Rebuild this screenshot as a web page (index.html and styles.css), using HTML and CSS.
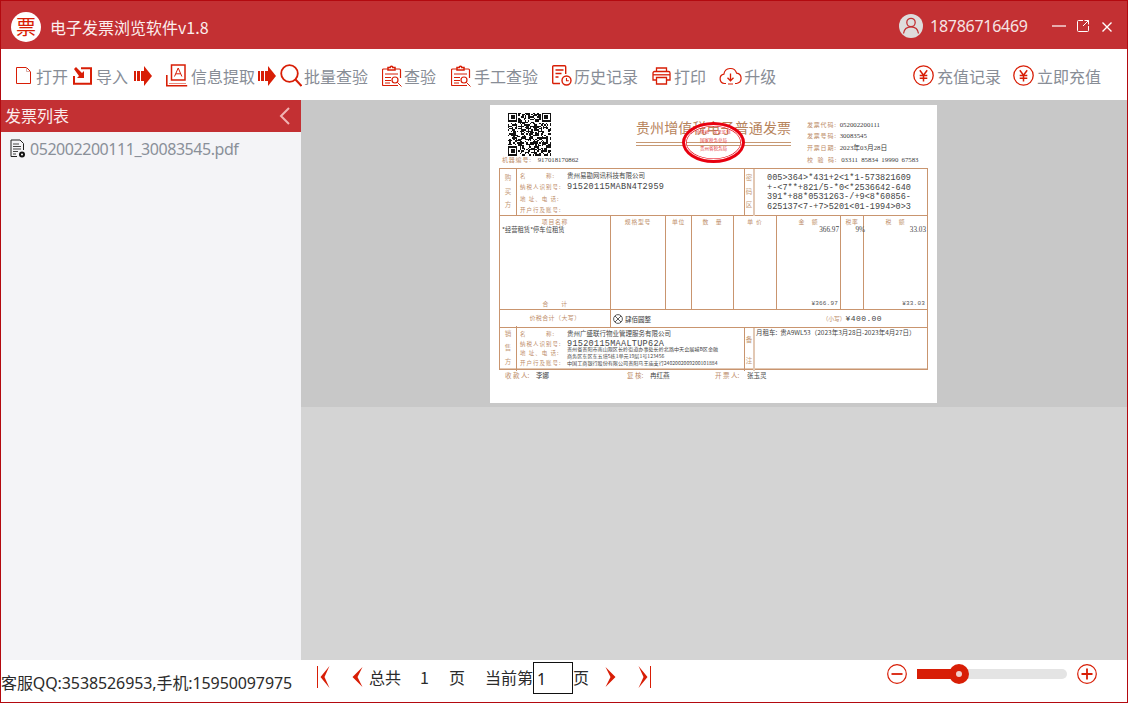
FILE: index.html
```html
<!DOCTYPE html>
<html lang="zh">
<head>
<meta charset="utf-8">
<title>电子发票浏览软件</title>
<link rel="stylesheet" href="styles.css">
</head>
<body>
<div class="app">
  <header class="titlebar">
    <div class="logo">票</div>
    <div class="app-name">电子发票浏览软件v1.8</div>
    <div class="spacer"></div>
    <svg class="avatar" viewBox="0 0 24 24"><circle cx="12" cy="12" r="12" fill="#dedcdc"/><circle cx="12" cy="8.500" r="4.200" fill="none" stroke="#c33033" stroke-width="1.300"/><path d="M4.500 19.500c.6-4.200 3.600-6.600 7.500-6.600s6.900 2.400 7.500 6.600" fill="none" stroke="#c33033" stroke-width="1.300"/></svg>
    <div class="phone">18786716469</div>
    <svg class="win win-min" viewBox="0 0 14 12"><path d="M0 6h14" stroke="#fff" stroke-width="1.200"/></svg>
    <svg class="win win-max" viewBox="0 0 12 12"><path d="M6 .5H1.500a1 1 0 0 0-1 1v9a1 1 0 0 0 1 1h9a1 1 0 0 0 1-1V6M7.500.5h4v4M11.500.5 6 6" fill="none" stroke="#fff" stroke-width="1"/></svg>
    <svg class="win win-close" viewBox="0 0 10 10"><path d="M.5.500l9 9M9.500.500l-9 9" stroke="#fff" stroke-width="1.400"/></svg>
  </header>

  <nav class="toolbar">
    <div class="tool t-open">
      <svg class="ic" width="15" height="17" viewBox="0 0 15 17"><path d="M.5.500h10l4 4v12H.5z" fill="none" stroke="#d81e06"/><path d="M10.500.500v4h4" fill="none" stroke="#d9a9a3"/></svg>
      <span>打开</span>
    </div>
    <div class="tool t-import">
      <svg class="ic" width="19" height="18" viewBox="0 0 19 18"><path d="M8 1.200h10v15.600H1V9" fill="none" stroke="#d81e06" stroke-width="2"/><path d="M1 2l2-2 6 6 2-2v7H4l2-2z" fill="#d81e06"/></svg>
      <span>导入</span>
    </div>
    <svg class="flow" width="18" height="20" viewBox="0 0 18 20"><path d="M0 5h2v10H0zM3 5h3v10H3zM7 5h3v10H7z" fill="#d81e06"/><path d="M10 0l8 10-8 10z" fill="#d81e06"/></svg>
    <div class="tool t-extract">
      <svg class="ic" width="22" height="23" viewBox="0 0 22 23"><path d="M5.500 1h13.500v15H5.500z" fill="none" stroke="#d81e06" stroke-width="1.500"/><path d="M8.500 12.500l3.700-8.500 3.700 8.500M9.800 9.800h4.800" fill="none" stroke="#d81e06"/><path d="M.8 11v10.700h20.400" fill="none" stroke="#d81e06" stroke-width="1.600"/><path d="M3 19.500h17" stroke="#e98c7e"/></svg>
      <span>信息提取</span>
    </div>
    <svg class="flow f2" width="18" height="20" viewBox="0 0 18 20"><path d="M0 5h2v10H0zM3 5h3v10H3zM7 5h3v10H7z" fill="#d81e06"/><path d="M10 0l8 10-8 10z" fill="#d81e06"/></svg>
    <div class="tool t-batch">
      <svg class="ic" width="22" height="23" viewBox="0 0 22 23"><circle cx="9.500" cy="9.500" r="8.300" fill="none" stroke="#d81e06" stroke-width="1.800"/><path d="M15.500 15.500l6 6.500" stroke="#d81e06" stroke-width="2"/></svg>
      <span>批量查验</span>
    </div>
    <div class="tool t-check">
      <svg class="ic" width="21" height="22" viewBox="0 0 21 22"><path d="M6 4H1.500a1 1 0 0 0-1 1v14.500a1 1 0 0 0 1 1h14.500M13 4h4.500a1 1 0 0 1 1 1v8" fill="none" stroke="#d81e06" stroke-width="1.200"/><path d="M6 5V2.500h2.200a1.300 1.300 0 0 1 2.600 0H13V5z" fill="none" stroke="#d81e06" stroke-width="1.500"/><path d="M3 9h13M3 12.500h6M3 15.500h6M3 18h5" stroke="#d81e06"/><circle cx="13" cy="15" r="3" fill="none" stroke="#d81e06" stroke-width="1.200"/><path d="M15.500 17.500l4 4" stroke="#d81e06"/></svg>
      <span>查验</span>
    </div>
    <div class="tool t-manual">
      <svg class="ic" width="21" height="22" viewBox="0 0 21 22"><path d="M6 4H1.500a1 1 0 0 0-1 1v14.500a1 1 0 0 0 1 1h14.500M13 4h4.500a1 1 0 0 1 1 1v8" fill="none" stroke="#d81e06" stroke-width="1.200"/><path d="M6 5V2.500h2.200a1.300 1.300 0 0 1 2.600 0H13V5z" fill="none" stroke="#d81e06" stroke-width="1.500"/><path d="M3 9h13M3 12.500h6M3 15.500h6M3 18h5" stroke="#d81e06"/><circle cx="13" cy="15" r="3" fill="none" stroke="#d81e06" stroke-width="1.200"/><path d="M15.500 17.500l4 4" stroke="#d81e06"/></svg>
      <span>手工查验</span>
    </div>
    <div class="tool t-history">
      <svg class="ic" width="20" height="21" viewBox="0 0 20 21"><path d="M8 18.500H1.700a1 1 0 0 1-1-1V1.700a1 1 0 0 1 1-1h11a1 1 0 0 1 1 1V9" fill="none" stroke="#d81e06" stroke-width="1.400"/><path d="M3.500 5h8M3.500 8.500h6M3.500 12h3" stroke="#d81e06" stroke-width="1.300"/><circle cx="14.500" cy="15.500" r="4.500" fill="#fff" stroke="#d81e06" stroke-width="1.400"/><path d="M14.500 13v2.800h2.300" fill="none" stroke="#d81e06" stroke-width="1.100"/></svg>
      <span>历史记录</span>
    </div>
    <div class="tool t-print">
      <svg class="ic" width="19" height="18" viewBox="0 0 19 18"><path d="M4.500 4.500V1h10v3.500" fill="none" stroke="#d81e06" stroke-width="1.300"/><path d="M4 13H1V6a1.500 1.500 0 0 1 1.500-1.500h14A1.500 1.500 0 0 1 18 6v7h-3" fill="none" stroke="#d81e06" stroke-width="1.300"/><path d="M1 7.800h17" stroke="#d81e06" stroke-width="1.300"/><path d="M4.500 10.500h10V17h-10z" fill="none" stroke="#d81e06" stroke-width="1.300"/></svg>
      <span>打印</span>
    </div>
    <div class="tool t-up">
      <svg class="ic" width="23" height="18" viewBox="0 0 23 18"><path d="M7 16.500H5.500a4.700 4.700 0 0 1-.6-9.300 6.500 6.500 0 0 1 12.700-1 5.200 5.200 0 0 1 0 10.300H16M9 17h5" fill="none" stroke="#d81e06" stroke-width="1.200"/><path d="M11.500 6.500v7M8.500 10.800l3 3 3-3" fill="none" stroke="#d81e06" stroke-width="1.300"/></svg>
      <span>升级</span>
    </div>
    <div class="spacer"></div>
    <div class="tool t-record">
      <svg class="ic" width="21" height="21" viewBox="0 0 21 21"><circle cx="10.500" cy="10.500" r="9.700" fill="none" stroke="#d81e06" stroke-width="1.300"/><path d="M6.800 5.200l3.700 5 3.700-5M10.500 10v6.500M6.700 10.500h7.600M6.700 13.300h7.600" fill="none" stroke="#d81e06" stroke-width="1.500"/></svg>
      <span>充值记录</span>
    </div>
    <div class="tool t-pay">
      <svg class="ic" width="21" height="21" viewBox="0 0 21 21"><circle cx="10.500" cy="10.500" r="9.700" fill="none" stroke="#d81e06" stroke-width="1.300"/><path d="M6.800 5.200l3.700 5 3.700-5M10.500 10v6.500M6.700 10.500h7.600M6.700 13.300h7.600" fill="none" stroke="#d81e06" stroke-width="1.500"/></svg>
      <span>立即充值</span>
    </div>
  </nav>

  <main class="main">
    <aside class="sidebar">
      <div class="side-head">
        <span>发票列表</span>
        <svg width="11" height="18" viewBox="0 0 11 18"><path d="M10 1 2 9l8 8" fill="none" stroke="#f0b4b4" stroke-width="2"/></svg>
      </div>
      <div class="file-row">
        <svg width="16" height="20" viewBox="0 0 16 20"><path d="M1 1h9l3.500 3.500V11M7 17.500H1z" fill="none" stroke="#222"/><path d="M1 1v16.500" stroke="#222"/><path d="M3 5h6M3 7.500h8M3 10h8M3 12.500h5M3 15h3" stroke="#444"/><circle cx="12" cy="15.500" r="3" fill="#111"/><circle cx="12" cy="15.500" r="1" fill="#fff"/></svg>
        <span>052002200111_30083545.pdf</span>
      </div>
    </aside>

    <section class="viewer">
      <div class="page-band">
        <article class="paper">
          <div class="inv-head">
            <div class="inv-left">
              <svg id="qr" class="qr" viewBox="0 0 33 33" shape-rendering="crispEdges"></svg>
              <div class="machine"><span class="lb hl hl-m">机器编号:</span> 917018170862</div>
            </div>
            <div class="inv-title">
              <div class="title-text">贵州增值税电子普通发票</div>
              <div class="title-rule"></div>
            </div>
            <div class="inv-meta">
              <div><span class="lb hl">发票代码:</span> 052002200111</div>
              <div><span class="lb hl">发票号码:</span> 30083545</div>
              <div><span class="lb hl">开票日期:</span> 2023年03月28日</div>
              <div class="check-code"><span class="lb hl">校 验 码:</span> 03311 85834 19990 67583</div>
            </div>
          </div>

          <div class="stamp">
            <div class="stamp-a">全国统一发票监制</div>
            <div class="stamp-b">国家税务总局</div>
            <div class="stamp-c">贵州省税务局</div>
          </div>

          <div class="table">
            <div class="row row-party">
              <div class="side-cell">购<br>买<br>方</div>
              <div class="party buyer">
                <div><span class="lb k">名　　　称:</span>贵州易勘网讯科技有限公司</div>
                <div><span class="lb k">纳税人识别号:</span><span class="taxid">91520115MABN4T2959</span></div>
                <div><span class="lb k">地 址、电 话:</span></div>
                <div><span class="lb k">开户行及账号:</span></div>
              </div>
              <div class="side-cell mid">密<br>码<br>区</div>
              <div class="cipher">005&gt;364&gt;*431+2&lt;1*1-573821609<br>+-&lt;7**+821/5-*0&lt;*2536642-640<br>391*+88*0531263-/+9&lt;8*60856-<br>625137&lt;7-+7&gt;5201&lt;01-1994&gt;0&gt;3</div>
            </div>

            <div class="row row-items">
              <div class="col col-name"><div class="ch">项目名称</div><div class="cv left">*经营租赁*停车位租赁</div><div class="cf center lb">合　　计</div></div>
              <div class="col"><div class="ch">规格型号</div></div>
              <div class="col"><div class="ch">单位</div></div>
              <div class="col"><div class="ch">数　量</div></div>
              <div class="col"><div class="ch">单 价</div></div>
              <div class="col"><div class="ch">金　额</div><div class="cv right">366.97</div><div class="cf num">¥366.97</div></div>
              <div class="col"><div class="ch">税率</div><div class="cv right rate">9%</div></div>
              <div class="col"><div class="ch">税　额</div><div class="cv right">33.03</div><div class="cf num">¥33.03</div></div>
            </div>

            <div class="row row-total">
              <div class="tot-label lb">价税合计（大写）</div>
              <div class="tot-val">
                <svg width="10" height="10" viewBox="0 0 10 10"><circle cx="5" cy="5" r="4.400" fill="none" stroke="#333" stroke-width=".8"/><path d="M2 2l6 6M8 2l-6 6" stroke="#333" stroke-width=".8"/></svg>
                <span>肆佰圆整</span>
                <span class="spacer"></span>
                <span class="lb small-k">（小写）</span><span class="mono-total">¥400.00</span>
              </div>
            </div>

            <div class="row row-party row-seller">
              <div class="side-cell">销<br>售<br>方</div>
              <div class="party seller">
                <div class="seller-name"><span class="lb k">名　　　称:</span>贵州广盛联行物业管理服务有限公司</div>
                <div class="seller-id"><span class="lb k">纳税人识别号:</span><span class="taxid">91520115MAALTUP62A</span></div>
                <div class="addr"><span class="lb k">地 址、电 话:</span><span class="addr-v">贵州省贵阳市南山观区长岭街道办事处长岭北路中天会展城B区金融<br>商务区东区东五塔5栋1单元19层1号123456</span></div>
                <div class="bank"><span class="lb k">开户行及账号:</span><span class="bank-v">中国工商银行股份有限公司贵阳马王庙支行2402002009200101884</span></div>
              </div>
              <div class="side-cell mid two">备<br>注</div>
              <div class="remark">月租车:&nbsp; 贵A9WL53（2023年3月28日-2023年4月27日）</div>
            </div>
          </div>

          <div class="inv-foot">
            <div class="f-a"><span class="lb fl w31">收 款 人:</span>李娜</div>
            <div class="f-b"><span class="lb fl w23">复 核:</span>冉红燕</div>
            <div class="f-c"><span class="lb fl w32">开 票 人:</span>张玉灵</div>
          </div>
        </article>
      </div>
      <div class="viewer-rest"></div>
    </section>
  </main>

  <footer class="footer">
    <div class="service">客服QQ:3538526953,手机:15950097975</div>
    <svg class="nav n-first" width="13" height="22" viewBox="0 0 13 22"><path d="M.5 0v22" stroke="#d81e06"/><path d="M12.500 0 3.500 11l9 11-5-11z" fill="#d81e06"/></svg>
    <svg class="nav n-prev" width="11" height="20" viewBox="0 0 11 20"><path d="M10.500 0 .5 10l10 10-5-10z" fill="#d81e06"/></svg>
    <span class="f-txt ft-total">总共</span>
    <span class="f-txt ft-count">1</span>
    <span class="f-txt ft-page">页</span>
    <span class="f-txt ft-cur">当前第</span>
    <input class="page-input" type="text" value="1" aria-label="当前页">
    <span class="f-txt">页</span>
    <svg class="nav n-next" width="11" height="20" viewBox="0 0 11 20"><path d="M.5 0l10 10-10 10 5-10z" fill="#d81e06"/></svg>
    <svg class="nav n-last" width="13" height="22" viewBox="0 0 13 22"><path d="M12.500 0v22" stroke="#d81e06"/><path d="M.5 0l9 11-9 11 5-11z" fill="#d81e06"/></svg>
    <div class="spacer"></div>
    <svg class="zoom-btn" width="20" height="20" viewBox="0 0 20 20"><circle cx="10" cy="10" r="9.300" fill="none" stroke="#d81e06" stroke-width="1.200"/><path d="M4.500 10h11" stroke="#d81e06" stroke-width="1.800"/></svg>
    <div class="slider"><div class="slider-fill"></div><div class="slider-thumb"></div></div>
    <svg class="zoom-btn" width="20" height="20" viewBox="0 0 20 20"><circle cx="10" cy="10" r="9.300" fill="none" stroke="#d81e06" stroke-width="1.200"/><path d="M4.500 10h11M10 4.500v11" stroke="#d81e06" stroke-width="1.800"/></svg>
  </footer>
</div>
<script src="qr.js"></script>
</body>
</html>
```

FILE: styles.css
```css
* { box-sizing: border-box; }
html, body { margin: 0; padding: 0; }
body { font-family: "Noto Sans", "Noto Sans CJK SC", sans-serif; overflow: hidden; }
.spacer { flex: 1; }

.app { width: 1128px; height: 703px; border: 1px solid #b3090f; display: flex; flex-direction: column; background: #fff; }

.titlebar { height: 48px; background: #c33033; color: #fff; display: flex; align-items: center; padding-left: 10px; flex: none; }
.logo { width: 30px; height: 30px; border-radius: 50%; background: #fff; color: #d81e06; font-size: 20px; line-height: 30px; text-align: center; margin-top: 3px; font-family: "Noto Sans CJK SC", sans-serif; }
.app-name { margin-left: 9px; font-size: 16px; line-height: 24px; margin-top: 4px; color: #fbeeee; font-family: "Noto Sans CJK SC", sans-serif; }
.avatar { width: 24px; height: 24px; margin-top: 2px; }
.phone { margin-left: 7px; font-size: 16px; width: 98px; letter-spacing: -.27px; margin-top: 2px; color: #f6e4e4; }
.win { display: block; flex: none; }
.win-min { width: 14px; height: 12px; margin-left: 24px; margin-top: 2px; }
.win-max { width: 12px; height: 12px; margin-left: 11px; margin-top: 1px; }
.win-close { width: 10px; height: 10px; margin-left: 13px; margin-right: 15px; margin-top: 3px; }

.toolbar { height: 51px; display: flex; align-items: center; padding-left: 15px; padding-top: 2px; flex: none; background: #fff; }
.tool { display: flex; align-items: center; color: #888d96; font-size: 16px; font-family: "Noto Sans CJK SC", sans-serif; }
.tool span { display: block; line-height: 22px; }
.ic { display: block; flex: none; }
.t-open .ic { margin-right: 5px; }
.t-open { margin-right: 5px; }
.t-import .ic { margin-right: 4px; }
.flow { display: block; flex: none; margin-left: 6px; margin-right: 14px; }
.flow.f2 { margin-left: 3px; margin-right: 4px; }
.t-extract .ic { margin-right: 3px; }
.t-batch .ic { margin-right: 2px; }
.t-batch { margin-right: 14px; }
.t-check .ic { margin-right: 1px; }
.t-check { margin-right: 15px; }
.t-manual .ic { margin-right: 2px; }
.t-manual { margin-right: 14px; }
.t-history .ic { margin-right: 2px; }
.t-history { margin-right: 14px; }
.t-print .ic { margin-right: 3px; }
.t-print { margin-right: 13px; }
.t-up .ic { margin-right: 2px; }
.t-record .ic { margin-right: 3px; }
.t-record { margin-right: 12px; }
.t-pay .ic { margin-right: 3px; }
.t-pay { margin-right: 26px; }

.main { flex: 1; display: flex; min-height: 0; }
.sidebar { width: 300px; background: #f4f4f7; flex: none; }
.side-head { height: 32px; background: #c33033; color: #fbecec; display: flex; align-items: center; justify-content: space-between; padding: 0 11px 2px 4px; font-size: 16px; font-family: "Noto Sans CJK SC", sans-serif; }
.side-head svg { margin-top: 2px; }
.file-row { display: flex; align-items: center; color: #8a9099; font-size: 16px; padding: 1px 0 0 9px; height: 33px; }
.file-row svg { display: block; flex: none; margin-right: 4px; }
.file-row span { letter-spacing: -.45px; }

.viewer { flex: 1; display: flex; flex-direction: column; min-width: 0; }
.page-band { height: 307px; background: #c8c8c8; display: flex; justify-content: center; padding: 5px 1px 0 0; flex: none; }
.viewer-rest { flex: 1; background: #d4d4d4; }

.paper { position: relative; width: 447px; height: 298px; background: #fff; color: #3a3a3a; font-family: "Liberation Serif", "Noto Sans CJK SC", serif; font-size: 6.800px; padding-left: 9px; overflow: hidden; }
.lb { color: #bd8c68; }
.hl { display: inline-block; width: 31px; font-size: 6px; letter-spacing: .8px; white-space: nowrap; font-family: "Noto Sans CJK SC", sans-serif; }
.hl-m { width: 34px; }
.inv-head { height: 63px; display: flex; margin-left: -9px; padding: 7px 0 0 12px; }
.inv-left { width: 134px; flex: none; }
.qr { display: block; width: 43px; height: 44px; margin-left: 6px; }
.machine { line-height: 8px; white-space: nowrap; }
.inv-title { width: 155px; flex: none; margin-right: 16px; }
.title-text { color: #b7845c; font-size: 14px; line-height: 16px; margin-top: 7px; letter-spacing: .1px; white-space: nowrap; font-family: "Noto Sans CJK SC", sans-serif; }
.title-rule { height: 4px; border-top: 1px solid #c79873; border-bottom: 1px solid #c79873; margin-top: 7px; }
.inv-meta { padding-top: 6.500px; line-height: 11.700px; white-space: nowrap; }
.check-code { word-spacing: 1.500px; }

.stamp { position: absolute; left: 192px; top: 17px; width: 63px; height: 41px; border-radius: 50%; border: 3px solid #e8000f; box-shadow: inset 0 0 0 1px #fff, inset 0 0 0 1.600px #e8000f; color: #e23a3a; font-size: 4px; text-align: center; line-height: 8px; font-family: "Noto Sans CJK SC", sans-serif; }
.stamp-a { padding-top: 3px; letter-spacing: .3px; }
.stamp-b, .stamp-c { font-size: 4.500px; }

.table { width: 429px; border: 1px solid #c9956f; }
.row { display: grid; border-top: 1px solid #c9956f; }
.row:first-child { border-top: 0; }
.row-party { grid-template-columns: 17px 228px 10px 1fr; height: 46px; }
.row-seller { height: 42px; border-bottom: 1px solid #e2c8b4; }
.side-cell { border-right: 1px solid #c9956f; color: #c59a78; text-align: center; font-size: 6.500px; line-height: 13.500px; padding-top: 2px; font-family: "Noto Sans CJK SC", sans-serif; }
.row-seller .side-cell { line-height: 14px; margin-top: -2px; padding-top: 0; }
.side-cell.mid { border-right: 2px solid #e2c8b4; }
.row-seller .side-cell.two { line-height: 21px; margin-top: 0; padding-top: 1px; }
.party { border-right: 1px solid #c9956f; padding: 1px 0 0 3px; line-height: 11.400px; font-family: "Noto Sans CJK SC", sans-serif; font-size: 6.500px; color: #444; white-space: nowrap; }
.buyer > div { height: 11.400px; }
.k { display: inline-block; width: 47px; font-size: 5.500px; letter-spacing: 1px; line-height: 8px; white-space: nowrap; }
.taxid { font-family: "Liberation Mono", monospace; font-size: 8.500px; letter-spacing: .3px; color: #444; }
.cipher { padding: 5px 0 0 12px; font-family: "Liberation Mono", monospace; font-size: 8.500px; letter-spacing: .04px; line-height: 9.500px; color: #444; white-space: nowrap; }
.row-items { grid-template-columns: 111px 55px 26px 42px 43px 64px 23px 1fr; height: 94px; }
.col { border-right: 1px solid #c9956f; display: flex; flex-direction: column; }
.col:last-child { border-right: 0; }
.ch { color: #c08f6c; text-align: center; font-size: 5.800px; line-height: 8px; padding-top: 2px; letter-spacing: .8px; font-family: "Noto Sans CJK SC", sans-serif; }
.cv { font-size: 7.200px; line-height: 8px; padding: 0 1px; color: #444; }
.cv.left { padding-left: 2px; font-size: 6.300px; font-family: "Noto Sans CJK SC", sans-serif; }
.cv.right { text-align: right; }
.cv.rate { margin-right: -3px; }
.cf { margin-top: auto; line-height: 8px; padding: 0 2px 1px; font-size: 5.800px; }
.cf.center { text-align: center; letter-spacing: .4px; }
.cf.num { text-align: right; font-family: "Liberation Mono", monospace; font-size: 6px; letter-spacing: .2px; color: #555; }
.row-total { grid-template-columns: 111px 1fr; height: 18px; }
.tot-label { border-right: 1px solid #c9956f; text-align: center; line-height: 16px; font-size: 6px; font-family: "Noto Sans CJK SC", sans-serif; letter-spacing: .4px; }
.tot-val { display: flex; align-items: center; padding: 0 45px 0 2px; font-size: 6.500px; font-family: "Noto Sans CJK SC", sans-serif; gap: 2px; }
.tot-val svg { display: block; flex: none; }
.small-k { font-size: 5.800px; }
.mono-total { font-family: "Liberation Mono", monospace; font-size: 8px; letter-spacing: .4px; color: #444; margin-left: -2px; }
.party.seller { padding-top: 0; }
.seller-name { line-height: 11px; }
.seller-id { line-height: 9px; }
.addr, .bank { display: flex; align-items: center; }
.addr { line-height: 6.800px; height: 14px; margin-top: -3.500px; }
.bank { line-height: 8px; margin-top: -1px; }
.addr .k, .bank .k { flex: none; }
.addr-v, .bank-v { font-size: 5.100px; font-family: "Noto Sans CJK SC", sans-serif; }
.remark { padding: 0 0 0 1px; line-height: 8px; font-size: 6.500px; font-family: "Noto Sans CJK SC", sans-serif; color: #444; white-space: nowrap; }
.inv-foot { display: flex; font-size: 6.500px; line-height: 8px; margin-top: 1px; font-family: "Noto Sans CJK SC", sans-serif; color: #444; }
.f-a { margin-left: 6px; width: 122px; }
.f-b { width: 88px; }
.f-c { width: 80px; }
.fl { display: inline-block; white-space: nowrap; }
.w31 { width: 31px; }
.w23 { width: 23px; }
.w32 { width: 32px; }

.footer { flex: none; height: 42px; display: flex; align-items: center; background: #fff; padding-right: 30px; padding-bottom: 9px; color: #2b2b2b; font-size: 16px; font-family: "Noto Sans CJK SC", sans-serif; }
.service { width: 316px; font-family: "Noto Sans", "Noto Sans CJK SC", sans-serif; letter-spacing: -.1px; white-space: nowrap; padding-top: 11px; }
.nav { display: block; flex: none; }
.n-prev { margin-left: 22px; margin-right: 6px; }
.f-txt { display: block; line-height: 22px; flex: none; }
.ft-count { margin-left: 19px; width: 29px; }
.ft-page { margin-right: 20px; }
.page-input { width: 40px; height: 32px; border: 1px solid #111; padding: 2px 0 0 3px; margin: 2px 0 0; font: 16px "Noto Sans", sans-serif; color: #222; background: #fff; border-radius: 0; outline: 0; }
.n-next { margin-left: 16px; margin-right: 22px; }
.zoom-btn { display: block; flex: none; margin-bottom: 5px; }
.slider { position: relative; width: 150px; height: 10px; margin: 0 10px 5px; background: #e4e4e4; border-radius: 0 5px 5px 0; flex: none; }
.slider-fill { width: 41px; height: 10px; background: #d81e06; }
.slider-thumb { position: absolute; left: 32px; top: -5px; width: 20px; height: 20px; border-radius: 50%; background: #d81e06; }
.slider-thumb::after { content: ""; display: block; width: 6px; height: 6px; border-radius: 50%; background: #f2d0cb; margin: 7px; }
```

FILE: qr.js
```js
// Draws the invoice's QR code with a fixed pseudo-random module pattern.
(function () {
  var svg = document.getElementById('qr');
  var n = 33, seed = 20230328, d = '';
  function next() {
    seed = (seed * 1103515245 + 12345) & 0x7fffffff;
    return (seed >> 16) & 1;
  }
  function inFinder(x, y, ox, oy) {
    return x >= ox - 1 && x <= ox + 7 && y >= oy - 1 && y <= oy + 7;
  }
  function finder(ox, oy) {
    d += 'M' + ox + ' ' + oy + 'h7v7h-7zM' + (ox + 1) + ' ' + (oy + 1) + 'v5h5v-5zM' + (ox + 2) + ' ' + (oy + 2) + 'h3v3h-3z';
  }
  for (var y = 0; y < n; y++) {
    for (var x = 0; x < n; x++) {
      var on = next();
      if (inFinder(x, y, 0, 0) || inFinder(x, y, 26, 0) || inFinder(x, y, 0, 26)) continue;
      if (on) d += 'M' + x + ' ' + y + 'h1v1h-1z';
    }
  }
  finder(0, 0); finder(26, 0); finder(0, 26);
  var p = document.createElementNS('http://www.w3.org/2000/svg', 'path');
  p.setAttribute('d', d);
  p.setAttribute('fill', '#111');
  p.setAttribute('fill-rule', 'evenodd');
  svg.appendChild(p);
})();
```
